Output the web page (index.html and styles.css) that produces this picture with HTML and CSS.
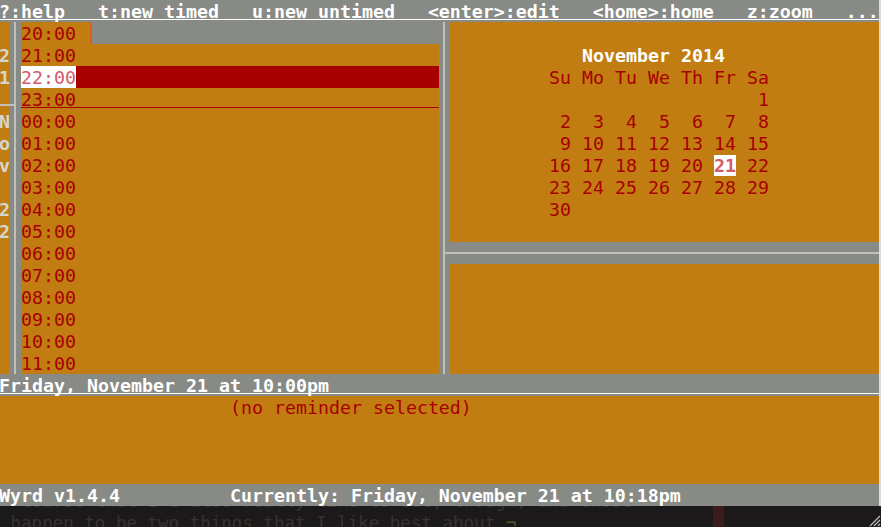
FILE: index.html
```html
<!DOCTYPE html>
<html>
<head>
<meta charset="utf-8">
<title>Wyrd</title>
<link rel="stylesheet" href="styles.css">
</head>
<body>
<div class="screen">
  <div class="term">
    <div class="bar ul">?:help   t:new timed   u:new untimed   &lt;enter&gt;:edit   &lt;home&gt;:home   z:zoom   ...</div>
    <div class="main">
      <div class="datecol">
        <div class="cell"></div>
        <div class="cell">2</div>
        <div class="cell">1</div>
        <div class="cell hline"></div>
        <div class="cell">N</div>
        <div class="cell">o</div>
        <div class="cell">v</div>
        <div class="cell"></div>
        <div class="cell">2</div>
        <div class="cell">2</div>
      </div>
      <div class="vsep vsep-left"></div>
      <div class="timed">
        <div class="trow first"><span class="t">20:00</span><span class="gap"></span><span class="cur"></span><span class="fill"></span></div>
        <div class="trow"><span class="t">21:00</span></div>
        <div class="trow sel"><span class="t">22:00</span></div>
        <div class="trow day"><span class="t">23:00</span></div>
        <div class="trow"><span class="t">00:00</span></div>
        <div class="trow"><span class="t">01:00</span></div>
        <div class="trow"><span class="t">02:00</span></div>
        <div class="trow"><span class="t">03:00</span></div>
        <div class="trow"><span class="t">04:00</span></div>
        <div class="trow"><span class="t">05:00</span></div>
        <div class="trow"><span class="t">06:00</span></div>
        <div class="trow"><span class="t">07:00</span></div>
        <div class="trow"><span class="t">08:00</span></div>
        <div class="trow"><span class="t">09:00</span></div>
        <div class="trow"><span class="t">10:00</span></div>
        <div class="trow"><span class="t">11:00</span></div>
      </div>
      <div class="vsep vsep-right"></div>
      <div class="rightpane">
        <div class="calendar">
          <div class="cline"> </div>
          <div class="cline">            <span class="title">November 2014</span></div>
          <div class="cline">         Su Mo Tu We Th Fr Sa</div>
          <div class="cline">                            1</div>
          <div class="cline">          2  3  4  5  6  7  8</div>
          <div class="cline">          9 10 11 12 13 14 15</div>
          <div class="cline">         16 17 18 19 20 <span class="today">21</span> 22</div>
          <div class="cline">         23 24 25 26 27 28 29</div>
          <div class="cline">         30</div>
        </div>
        <div class="hsep"></div>
        <div class="untimed"></div>
      </div>
    </div>
    <div class="bar ul">Friday, November 21 at 10:00pm</div>
    <div class="desc">
      <div class="dline">                     (no reminder selected)</div>
    </div>
    <div class="bar">Wyrd v1.4.4          Currently: Friday, November 21 at 10:18pm</div>
  </div>
  <div class="behind">
    <div class="bl">  course that I'd also really like to see, though, and those</div>
    <div class="bl"> happen to be two things that I like best about <span class="not">¬</span></div>
    <svg class="grip" width="14" height="14" viewBox="0 0 14 14"><path d="M13 3L3 13M13 7L7 13M13 11L11 13" stroke="#bdbdb8" stroke-width="1.2"/></svg>
  </div>
</div>
</body>
</html>
```

FILE: styles.css
```css
* {
  box-sizing: border-box;
  margin: 0;
  padding: 0;
}

html,
body {
  width: 881px;
  height: 527px;
  overflow: hidden;
}

body {
  background: #dcdcd8;
  font-family: "DejaVu Sans Mono", "Liberation Mono", monospace;
  font-size: 18.27px;
  line-height: 22px;
}

.screen {
  width: 881px;
}

.term {
  width: 880px;
  margin-left: -1px;
}

.bar {
  height: 22px;
  padding-top: 1px;
  background: #888a85;
  color: #ffffff;
  font-weight: bold;
  white-space: pre;
  overflow: hidden;
}

.bar.ul {
  background: linear-gradient(#ffffff, #ffffff) 0 19px / 100% 1px no-repeat, #888a85;
}

.main {
  display: flex;
  height: 352px;
}

.datecol {
  width: 11px;
  background: #c17d11;
  color: #d3d7cf;
  font-weight: bold;
}

.datecol .cell {
  height: 22px;
  padding-top: 1px;
  text-align: center;
}

.datecol .cell.hline {
  background: linear-gradient(#bfc0ba, #bfc0ba) 0 16px / 100% 2px no-repeat;
}

.vsep {
  width: 11px;
  background: linear-gradient(to right, transparent 4px, #bfc0ba 4px, #bfc0ba 6px, transparent 6px), #888a85;
}

.vsep-left {
  background: linear-gradient(#bfc0ba, #bfc0ba) 0 82px / 5px 2px no-repeat,
    linear-gradient(to right, transparent 4px, #bfc0ba 4px, #bfc0ba 6px, transparent 6px), #888a85;
}

.vsep-right {
  background: linear-gradient(#bfc0ba, #bfc0ba) 5px 230px / 6px 2px no-repeat,
    linear-gradient(to right, transparent 4px, #bfc0ba 4px, #bfc0ba 6px, transparent 6px), #888a85;
}

.timed {
  width: 418px;
  background: #c17d11;
  color: #a80000;
}

.trow {
  height: 22px;
  display: flex;
  white-space: pre;
}

.trow .t {
  width: 55px;
  flex: none;
  padding-top: 1px;
}

.trow.first .gap {
  width: 14px;
  flex: none;
}

.trow.first .cur {
  width: 2px;
  flex: none;
  background: #d8621c;
}

.trow.first .fill {
  flex: 1;
  background: #888a85;
}

.trow.sel {
  background: #a80000;
}

.trow.sel .t {
  background: #ffffff;
  color: #d5586a;
}

.trow.day {
  background: linear-gradient(#a80000, #a80000) 0 19px / 100% 1px no-repeat;
}

.rightpane {
  width: 429px;
  display: flex;
  flex-direction: column;
}

.calendar {
  height: 220px;
  background: #c17d11;
  color: #a80000;
}

.cline {
  height: 22px;
  padding-top: 1px;
  white-space: pre;
}

.calendar .title {
  color: #ffffff;
  font-weight: bold;
}

.calendar .today {
  background: #ffffff;
  color: #d5586a;
  font-weight: bold;
}

.hsep {
  height: 22px;
  background: linear-gradient(#bfc0ba, #bfc0ba) 0 10px / 100% 2px no-repeat, #888a85;
}

.untimed {
  flex: 1;
  background: #c17d11;
}

.desc {
  height: 88px;
  background: #c17d11;
  color: #a80000;
}

.dline {
  height: 22px;
  padding-top: 1px;
  white-space: pre;
}

.behind {
  position: relative;
  height: 21px;
  overflow: hidden;
  background: linear-gradient(#3b1b1b, #3b1b1b) 713px 0 / 11px 100% no-repeat, #1b1919;
  color: #383232;
  font-size: 17.5px;
}

.behind .bl {
  height: 22px;
  line-height: 22px;
  white-space: pre;
}

.behind .bl:first-child {
  margin-top: -16px;
}

.behind .not {
  color: #4a5a2a;
}

.grip {
  position: absolute;
  right: 0;
  bottom: 0;
}
```
